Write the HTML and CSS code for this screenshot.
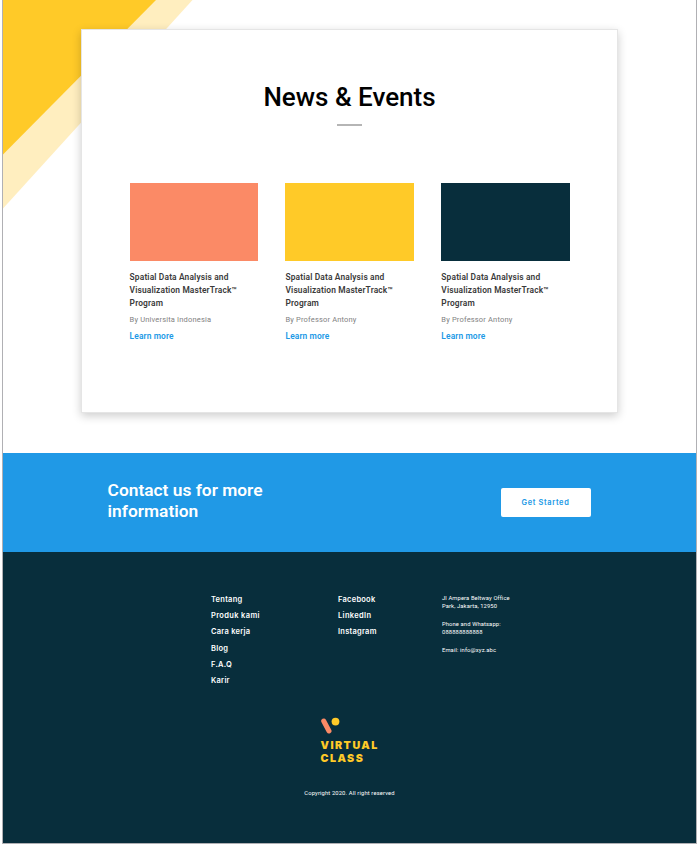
FILE: index.html
```html
<!DOCTYPE html>
<html lang="en">
<head>
<meta charset="utf-8">
<title>Virtual Class</title>
<link rel="stylesheet" href="styles.css">
</head>
<body>
<div class="page">
  <section class="news">
    <svg class="corner" width="190" height="209" viewBox="0 0 190 209" aria-hidden="true">
      <path d="M0 0H189.500L0 208.500Z" fill="#ffeebf"/>
      <path d="M0 0H153L0 154.500Z" fill="#ffca28"/>
    </svg>
    <div class="card">
      <h1>News &amp; Events</h1>
      <div class="rule"></div>
      <div class="items">
        <article>
          <div class="thumb coral"></div>
          <h2>Spatial Data Analysis and<br>Visualization MasterTrack™<br>Program</h2>
          <p>By Universita Indonesia</p>
          <a>Learn more</a>
        </article>
        <article>
          <div class="thumb yellow"></div>
          <h2>Spatial Data Analysis and<br>Visualization MasterTrack™<br>Program</h2>
          <p>By Professor Antony</p>
          <a>Learn more</a>
        </article>
        <article>
          <div class="thumb navy"></div>
          <h2>Spatial Data Analysis and<br>Visualization MasterTrack™<br>Program</h2>
          <p>By Professor Antony</p>
          <a>Learn more</a>
        </article>
      </div>
    </div>
  </section>
  <section class="contact">
    <h2>Contact us for more<br>information</h2>
    <a class="button">Get Started</a>
  </section>
  <footer>
    <div class="columns">
      <ul class="links">
        <li>Tentang</li><li>Produk kami</li><li>Cara kerja</li><li>Blog</li><li>F.A.Q</li><li>Karir</li>
      </ul>
      <ul class="links">
        <li>Facebook</li><li>LinkedIn</li><li>Instagram</li>
      </ul>
      <address>
        <p>Jl Ampera Beltway Office<br>Park, Jakarta, 12950</p>
        <p>Phone and Whatsapp:<br>088888888888</p>
        <p>Email: info@xyz.abc</p>
      </address>
    </div>
    <div class="logo">
      <svg width="20" height="18" viewBox="0 0 20 18" aria-hidden="true">
        <path d="M2.700 4L8 14" stroke="#fb8a66" stroke-width="5" stroke-linecap="round"/>
        <circle cx="14.500" cy="4.600" r="3.900" fill="#ffca28"/>
      </svg>
      <div class="name">VIRTUAL<br>CLASS</div>
    </div>
    <div class="copyright">Copyright 2020. All right reserved</div>
  </footer>
</div>
</body>
</html>
```
FILE: styles.css
```css
* { box-sizing: border-box; }
body { margin: 0; background: #fff; font-family: Roboto, sans-serif; overflow: hidden; }
h1, h2, p, ul { margin: 0; padding: 0; }
.page { width: 695px; height: 844px; margin-left: 2px; border: 1px solid #b0b0b4; border-top: 0; }
.news { position: relative; height: 452.600px; padding: 29px 0 0 78px; }
.corner { position: absolute; left: 0; top: 0; }
.card { position: relative; width: 537px; height: 384px; padding: 49px 48px 0; background: #fff; border: 1px solid #e5e5e5; box-shadow: 0 3px 9px rgba(0, 0, 0, .2); }
h1 { font-weight: 500; font-size: 26px; line-height: 36px; text-align: center; color: #000; }
.rule { width: 25px; height: 2px; margin: 9px auto 0; background: #b5b5b5; }
.items { display: grid; grid-template-columns: repeat(3, 128.200px); column-gap: 27.700px; margin: 57.300px -2px 0 -0.400px; }
.thumb { height: 78px; margin-bottom: 9.700px; }
.coral { background: #fb8a66; }
.yellow { background: #ffca28; }
.navy { background: #082e3c; }
.items h2 { font-weight: 600; font-size: 8.400px; line-height: 13px; letter-spacing: .15px; color: #3a3a3a; white-space: nowrap; }
.items p { margin-top: 4px; font-size: 7.500px; line-height: 12px; letter-spacing: .17px; color: #828282; }
.items a { display: block; margin-top: 4.300px; font-weight: 600; font-size: 8.400px; line-height: 13px; letter-spacing: .12px; color: #2099e6; }
.contact { display: flex; height: 99.400px; padding: 0 105px 0 104.600px; align-items: center; justify-content: space-between; background: #2099e6; }
.contact h2 { padding-bottom: 2px; font-weight: 600; font-size: 17.350px; line-height: 21.500px; color: #fff; }
.button { width: 90px; height: 29px; border-radius: 2px; background: #fff; color: #2099e6; font: 600 7.400px/29px Inter, sans-serif; letter-spacing: .65px; padding-right: 1px; text-align: center; }
footer { height: 291px; padding-top: 39px; background: #082e3c; color: #fff; }
.columns { display: grid; grid-template-columns: 127px 104px 100px; height: 126px; margin-left: 208px; }
.links { padding-top: 1px; list-style: none; font: 600 7.500px/16.200px Inter, sans-serif; letter-spacing: .25px; white-space: nowrap; }
.links li:nth-child(2) { letter-spacing: .35px; }
address { padding-top: 2.600px; font-style: normal; font-weight: 400; font-size: 5.800px; line-height: 8.700px; letter-spacing: .12px; white-space: nowrap; }
address p + p { margin-top: 8.700px; }
.logo { width: 60px; margin-left: 317.500px; }
.logo svg { display: block; }
.name { margin-top: 4px; font: 900 10.700px/13px Inter, sans-serif; letter-spacing: 1.450px; color: #ffca28; }
.copyright { margin-top: 23px; font-weight: 400; font-size: 5.800px; line-height: 10px; letter-spacing: .14px; text-align: center; }
```
